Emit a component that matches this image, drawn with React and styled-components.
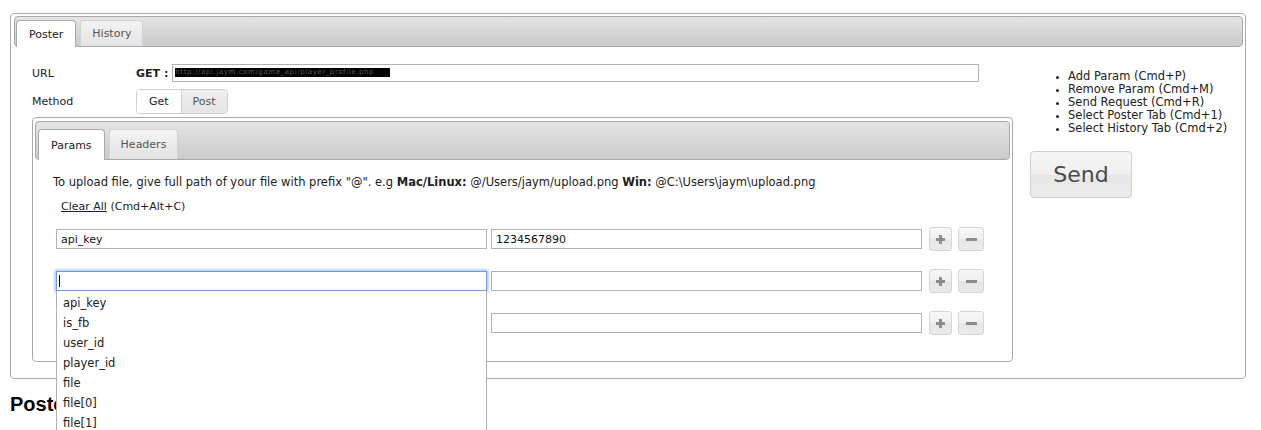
import React from 'react';
import styled, { createGlobalStyle } from 'styled-components';

const GlobalStyle = createGlobalStyle`
  html {
    overflow: hidden;
  }
  body {
    margin: 0;
    background: #fff;
    font-family: "DejaVu Sans", Verdana, sans-serif;
    font-size: 11.5px;
    color: #222;
  }
`;

// Layout
const Page = styled.div`
  box-sizing: border-box;
  height: 100vh;
  min-height: 430px;
  overflow: hidden;
  padding: 13px 15px 0 10px;
`;

const Panel = styled.div`
  border: 1px solid #aaa;
  border-radius: 4px;
  background: #fff;
  padding: ${({ $pad }) => $pad};
`;

const TabBar = styled.div`
  box-sizing: border-box;
  display: flex;
  align-items: flex-start;
  gap: 4px;
  height: ${({ $h }) => $h}px;
  padding: ${({ $pt }) => $pt}px 0 0 ${({ $pl }) => $pl}px;
  border: 1px solid #aaa;
  border-radius: 4px;
  background: linear-gradient(#e5e5e5, #cacaca);
`;

const Tab = styled.div`
  box-sizing: border-box;
  display: flex;
  align-items: center;
  height: ${({ $h, $active }) => ($active ? $h + 1 : $h)}px;
  padding: 0 ${({ $px }) => $px}px;
  border: 1px solid ${({ $active }) => ($active ? '#aaa' : '#d3d3d3')};
  border-bottom: 0;
  border-radius: 4px 4px 0 0;
  background: ${({ $active }) => ($active ? '#fff' : 'linear-gradient(#f4f4f4, #e3e3e3)')};
  color: ${({ $active }) => ($active ? '#212121' : '#555')};
  font-size: 11px;
`;

const TabBody = styled.div`
  display: flex;
  gap: 17px;
  padding: 17px 0 16px 18px;
`;

const LeftCol = styled.div`
  width: 981px;
  flex: none;
`;

const RightCol = styled.div`
  flex: 1;
`;

const FieldRow = styled.div`
  display: flex;
  align-items: center;
  margin-top: ${({ $mt }) => $mt || 0}px;
  font-size: 11px;
`;

const FieldLabel = styled.div`
  width: 104px;
`;

const Verb = styled.b`
  margin-right: 4px;
`;

const UrlBox = styled.div`
  box-sizing: border-box;
  width: 807px;
  height: 18px;
  border: 1px solid #b3b3b3;
  padding: 3px 2px;
`;

const Redacted = styled.span`
  display: block;
  width: 215px;
  height: 9px;
  overflow: hidden;
  background: #000;
  color: #5a5a5a;
  font-size: 7px;
  line-height: 9px;
  white-space: nowrap;
  letter-spacing: 0.6px;
`;

const ButtonSet = styled.div`
  display: flex;
  height: 25px;
  border: 1px solid #cfcfcf;
  border-radius: 4px;
  overflow: hidden;
  box-sizing: border-box;
`;

const SetButton = styled.div`
  display: flex;
  align-items: center;
  padding: 0 ${({ $px }) => $px}px;
  background: ${({ $on }) => ($on ? '#fff' : 'linear-gradient(#f0f0f0, #e4e4e4)')};
  border-left: ${({ $on }) => ($on ? '0' : '1px solid #d3d3d3')};
  color: ${({ $on }) => ($on ? '#222' : '#555')};
`;

const InnerBody = styled.div`
  padding: 15px 0 26px 18px;
`;

const Hint = styled.div`
  line-height: 14px;
`;

const ClearLine = styled.div`
  line-height: 14px;
  margin: 11px 0 0 8px;
  font-size: 11px;
  a {
    color: #222;
    text-decoration: underline;
  }
`;

const ParamList = styled.div`
  display: flex;
  flex-direction: column;
  gap: 18px;
  margin: 13px 0 0 3px;
`;

const ParamRow = styled.div`
  display: flex;
  align-items: center;
  height: 24px;
`;

const KeyWrap = styled.div`
  position: relative;
  width: 431px;
`;

const TextField = styled.input`
  box-sizing: border-box;
  display: block;
  width: 431px;
  height: 20px;
  margin: 0;
  padding: 0 4px;
  border: 1px solid ${({ $focus }) => ($focus ? '#6f9ed6' : '#b3b3b3')};
  box-shadow: ${({ $focus }) => ($focus ? '0 0 3px 1px rgba(110, 160, 220, 0.75)' : 'none')};
  border-radius: 0;
  outline: none;
  font-family: "DejaVu Sans", Verdana, sans-serif;
  font-size: 11px;
  color: #111;
  background: #fff;
`;

const ValueField = styled(TextField)`
  margin-left: 4px;
`;

const Caret = styled.span`
  position: absolute;
  left: 3px;
  top: 4px;
  width: 1px;
  height: 12px;
  background: #000;
`;

const IconButton = styled.div`
  box-sizing: border-box;
  display: flex;
  align-items: center;
  justify-content: center;
  width: ${({ $w }) => $w}px;
  height: 24px;
  margin-left: ${({ $ml }) => $ml}px;
  border: 1px solid #d6d6d6;
  border-radius: 3px;
  background: linear-gradient(#f7f7f7 0%, #f0f0f0 50%, #e6e6e6 52%, #ebebeb 100%);
`;

const Dropdown = styled.ul`
  position: absolute;
  left: 0;
  top: 100%;
  z-index: 5;
  box-sizing: border-box;
  width: 431px;
  margin: 0;
  padding: 2px 0 0;
  list-style: none;
  background: #fff;
  border: 1px solid #b0b0b0;
  border-top: 0;
`;

const DropItem = styled.li`
  height: 20px;
  line-height: 20px;
  padding-left: 6px;
  font-size: 11.5px;
  color: #222;
`;

const Shortcuts = styled.ul`
  margin: 6px 0 0;
  padding-left: 38px;
  line-height: 13px;
  li::marker {
    font-size: 9px;
  }
`;

const SendButton = styled.div`
  box-sizing: border-box;
  display: flex;
  align-items: center;
  justify-content: center;
  width: 102px;
  height: 47px;
  margin-top: 16px;
  border: 1px solid #cfcfcf;
  border-radius: 4px;
  background: linear-gradient(#f6f6f6 0%, #f0f0f0 50%, #e7e7e7 52%, #ececec 100%);
  color: #4a4a4a;
  font-size: 22px;
`;

const Heading = styled.h2`
  margin: 13px 0 0;
  font-family: "Liberation Sans", Arial, sans-serif;
  font-size: 20px;
  line-height: 24px;
  font-weight: bold;
  color: #000;
`;

const PlusIcon = () => (
  <svg width="9" height="9" viewBox="0 0 9 9">
    <rect x="3" y="0" width="3" height="9" fill="#8c8c8c" />
    <rect x="0" y="3" width="9" height="3" fill="#8c8c8c" />
  </svg>
);

const MinusIcon = () => (
  <svg width="11" height="3" viewBox="0 0 11 3">
    <rect x="0" y="0" width="11" height="3" fill="#8c8c8c" />
  </svg>
);

const suggestions = ['api_key', 'is_fb', 'user_id', 'player_id', 'file', 'file[0]', 'file[1]', 'file[2]'];

const params = [
  { key: 'api_key', value: '1234567890' },
  { key: '', value: '', focus: true },
  { key: '', value: '' },
];

const shortcuts = [
  'Add Param (Cmd+P)',
  'Remove Param (Cmd+M)',
  'Send Request (Cmd+R)',
  'Select Poster Tab (Cmd+1)',
  'Select History Tab (Cmd+2)',
];

const App = () => {
  return (
    <>
      <GlobalStyle />
      <Page>
        <Panel $pad="2px 2px 0 3px">
          <TabBar $h={31} $pt={3} $pl={1}>
            <Tab $h={26} $px={12} $active>Poster</Tab>
            <Tab $h={26} $px={11}>History</Tab>
          </TabBar>
          <TabBody>
            <LeftCol>
              <FieldRow>
                <FieldLabel>URL</FieldLabel>
                <Verb>GET :</Verb>
                <UrlBox>
                  <Redacted>http://api.jaym.com/game_api/player_profile.php</Redacted>
                </UrlBox>
              </FieldRow>
              <FieldRow $mt={7}>
                <FieldLabel>Method</FieldLabel>
                <ButtonSet>
                  <SetButton $on $px={12}>Get</SetButton>
                  <SetButton $px={11}>Post</SetButton>
                </ButtonSet>
              </FieldRow>
              <Panel $pad="3px 2px 0" style={{ marginTop: 3 }}>
                <TabBar $h={39} $pt={7} $pl={2}>
                  <Tab $h={30} $px={12} $active>Params</Tab>
                  <Tab $h={30} $px={11}>Headers</Tab>
                </TabBar>
                <InnerBody>
                  <Hint>
                    To upload file, give full path of your file with prefix "@". e.g <b>Mac/Linux:</b> @/Users/jaym/upload.png <b>Win:</b> @C:\Users\jaym\upload.png
                  </Hint>
                  <ClearLine>
                    <a href="#clear">Clear All</a> (Cmd+Alt+C)
                  </ClearLine>
                  <ParamList>
                    {params.map((p, i) => (
                      <ParamRow key={i}>
                        <KeyWrap>
                          <TextField readOnly value={p.key} $focus={p.focus} />
                          {p.focus && <Caret />}
                          {p.focus && (
                            <Dropdown>
                              {suggestions.map((s) => (
                                <DropItem key={s}>{s}</DropItem>
                              ))}
                            </Dropdown>
                          )}
                        </KeyWrap>
                        <ValueField readOnly value={p.value} />
                        <IconButton $w={23} $ml={7}>
                          <PlusIcon />
                        </IconButton>
                        <IconButton $w={26} $ml={6}>
                          <MinusIcon />
                        </IconButton>
                      </ParamRow>
                    ))}
                  </ParamList>
                </InnerBody>
              </Panel>
            </LeftCol>
            <RightCol>
              <Shortcuts>
                {shortcuts.map((s) => (
                  <li key={s}>{s}</li>
                ))}
              </Shortcuts>
              <SendButton>Send</SendButton>
            </RightCol>
          </TabBody>
        </Panel>
        <Heading>Poster</Heading>
      </Page>
    </>
  );
};

export default App;
